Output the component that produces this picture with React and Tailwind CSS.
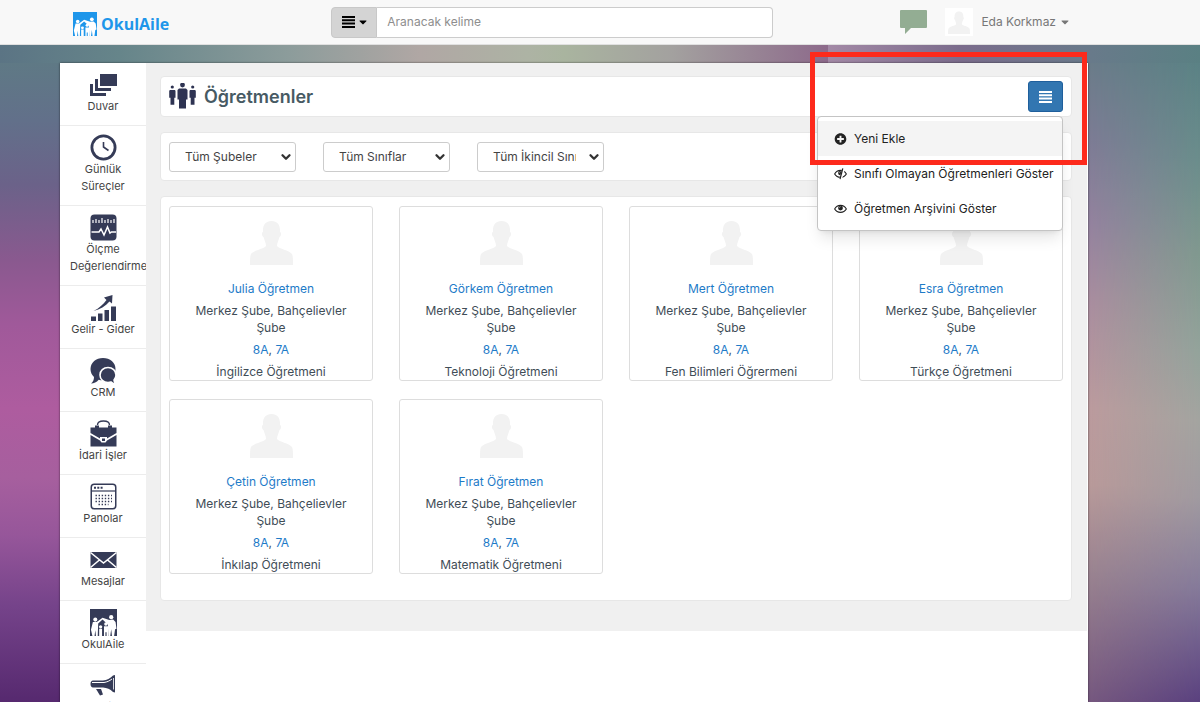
import React from 'react';
import { ChevronDown } from 'lucide-react';
import { FaPlusCircle, FaCaretDown } from 'react-icons/fa';

const DuvarIcon = () => (
  <svg viewBox="0 0 27 27" className="w-[27px] h-[27px]" fill="currentColor">
    <path d="M10 3h17v12H10zM5 8h3v9h13v3H5zM0 13h3v9h13v3H0z" />
  </svg>
);

const ClockIcon = () => (
  <svg viewBox="0 0 27 27" className="w-[27px] h-[27px]" fill="none" stroke="currentColor">
    <circle cx="13.5" cy="13.5" r="11.6" strokeWidth="2.8" />
    <path d="M13.500 8v5l5 3.500" strokeWidth="1.6" />
  </svg>
);

const MeasureIcon = () => (
  <svg viewBox="0 0 27 27" className="w-[27px] h-[27px]">
    <rect x="0.5" y="0.5" width="26" height="26" rx="4" fill="currentColor" />
    <path d="M3 6v3M6 5v4M9 6v3M12 4v5M15 6v3M18 5v4M21 6v3M24 5v4" stroke="#fff" strokeWidth="1.2" />
    <path d="M1.500 18H9l2-3 3 6 3.500-8 2.500 6 1.500-1H26" fill="none" stroke="#fff" strokeWidth="1.5" />
  </svg>
);

const ChartIcon = () => (
  <svg viewBox="0 0 27 27" className="w-[27px] h-[27px]" fill="currentColor">
    <path d="M1 22.500h5V27H1zM8 19.500h4.500V27H8zM14.500 16H19v11h-4.500zM21 12.500h5V27h-5z" />
    <path d="M3.500 17c6-3 9.500-6.500 13-11L14 3.500 22.500 1 22 9.500l-2.500-2C15.500 12 10 15.500 3.500 17z" />
  </svg>
);

const CrmIcon = () => (
  <svg viewBox="0 0 27 27" className="w-[27px] h-[27px]">
    <path d="M13 1c7 0 12.500 4.500 12.500 11S20 23.500 13 23.500c-1.500 0-3-.2-4.300-.7C6.500 25.500 4 26.500 1 26.500c2-1.500 3-3.500 3-6.500C1.800 18 .500 15.300.500 12 .500 5.500 6 1 13 1z" fill="currentColor" />
    <path d="M18 10.500c4.500 0 8 3.200 8 7.500 0 2-.8 3.800-2 5 0 1.500 1 3 2.500 4-2.500 0-4.500-.800-5.500-2-1 .4-2 .5-3 .5-4.500 0-8-3.200-8-7.500s3.500-7.500 8-7.500z" fill="currentColor" stroke="#fff" strokeWidth="1.600" />
  </svg>
);

const BagIcon = () => (
  <svg viewBox="0 0 27 27" className="w-[27px] h-[27px]" fill="currentColor">
    <path d="M7.500 5c0-3 2-4 6-4s6 1 6 4" fill="none" stroke="currentColor" strokeWidth="1.400" />
    <path d="M.500 7.500H5V5.500h4v2h9v-2h4v2h4.500V13L17 18.500V17h-7v1.500L.500 13z" />
    <path d="M.500 15l9.500 5.500 1.500 2h4l1.500-2L26.500 15v11.500H.500z" />
    <path d="M12 18.500h3V21h-3z" />
  </svg>
);

const PanelIcon = () => (
  <svg viewBox="0 0 27 27" className="w-[27px] h-[27px]" fill="none" stroke="currentColor">
    <rect x="1.25" y="1.25" width="24.500" height="24.500" rx="3" strokeWidth="1.500" />
    <path d="M1.500 8h24" strokeWidth="1.200" />
    <path d="M4 4.700h9" strokeWidth="2" strokeDasharray="2 1.300" />
    <path d="M5.500 12.500h16.500M5.500 15.500h16.500M5.500 18.500h16.500M8.500 21.500h10" strokeWidth="1.400" strokeDasharray="1.400 1.700" />
  </svg>
);

const MailIcon = () => (
  <svg viewBox="0 0 27 27" className="w-[27px] h-[27px]">
    <path d="M.500 6h26v16H.500z" fill="currentColor" />
    <path d="M.500 6.500l13 10.500 13-10.500M.500 21.500l9.500-8M26.500 21.500l-9.500-8" fill="none" stroke="#fff" strokeWidth="1.600" />
  </svg>
);

const MegaphoneIcon = () => (
  <svg viewBox="0 0 27 27" className="w-[27px] h-[27px]" fill="currentColor">
    <path d="M3 8.500h10c4-.5 7-2 10-5l2-.5v17.500l-2-.5c-3-3-6-4-10-4.500H3c-1.500 0-2.500-1.500-2.500-3.500S1.500 8.500 3 8.500z" />
    <path d="M6 17h5l2 5.500-3 1z" />
    <path d="M2 10.500h12c3-.5 5.500-1.500 8-3.500" fill="none" stroke="#fff" strokeWidth="1" />
    <path d="M23.500 6v11.500" stroke="#fff" strokeWidth="0.800" />
  </svg>
);

const FamilyIcon = ({ className }) => (
  <svg viewBox="0 0 28 28" className={className}>
    <path d="M0 0h28v28H0z" fill="currentColor" />
    <g fill="#fff">
      <circle cx="5.500" cy="11" r="2.100" />
      <circle cx="22" cy="8.500" r="2.200" />
      <circle cx="11" cy="18.500" r="1.700" />
      <circle cx="16.500" cy="15.500" r="1.800" />
      <path d="M3 13.500h4l6-4.500 7 2.500 4-.5 2.500 2.500 1 7-1.500.500L25 28h-2.200l-.8-7-1 7h-2l-.5-12-5.500-5L8.500 15 8 28H6.200l-.7-6-.8 6H2.500L1 21.500z" />
      <path d="M9.500 20.500h3V28h-3zM14.500 18h4.200V28h-1.500v-4h-1.200v4h-1.500z" />
    </g>
  </svg>
);

const PeopleIcon = () => (
  <svg viewBox="0 1 27 27" className="w-[27px] h-[27px]" fill="#2e3352">
    <circle cx="13.500" cy="3" r="2.400" />
    <path d="M10 6.500h7l1.500 1.500v9.500H17V26.500h-7v-9H8.500V8z" />
    <circle cx="3.300" cy="5" r="1.600" />
    <path d="M1 8h4.800l.7.800v7H5.300v7H1.500v-7H.200v-7z" />
    <circle cx="23.700" cy="5" r="1.600" />
    <path d="M21.200 8H26l.800.800v7h-1.300v7h-3.800v-7h-1.200v-7z" />
  </svg>
);

const Avatar = ({ className }) => (
  <svg viewBox="0 0 43 45" className={className} fill="#f2f2f2">
    <path d="M21.500 1c6 0 9 4 8.500 11 1.500 0 1.500 4-.5 5-1 4-2.500 5.500-2.500 9 2 3 12 4 15 8 1 2 1 6 1 11H0c0-5 0-9 1-11 3-4 13-5 15-8 0-3.500-1.500-5-2.500-9-2-1-2-5-.5-5C12.500 5 15.500 1 21.500 1z" />
  </svg>
);

const ListIcon = ({ className }) => (
  <svg viewBox="0 0 13 12" className={className} stroke="currentColor" strokeWidth="2">
    <path d="M0 1h13M0 4.300h13M0 7.600h13M0 11h13" />
  </svg>
);

const EyeIcon = ({ slashed }) => (
  <svg viewBox="0 0 14 12" className="w-[13px] h-3 shrink-0" fill="none" stroke="currentColor">
    <path d="M.700 6C3.500.800 10.500.800 13.300 6 10.500 10.800 3.500 10.800.700 6z" strokeWidth="1.200" />
    <circle cx="7" cy="5" r="2.600" fill="currentColor" stroke="none" />
    <path d="M5.800 4.500a1.300 1.300 0 0 1 1.200-1" stroke="#fff" strokeWidth="0.700" />
    {slashed && (
      <>
        <path d="M10.500 0L7 12" stroke="#fff" strokeWidth="2.800" />
        <path d="M9.500 0L6.500 11.500" strokeWidth="1.300" />
      </>
    )}
  </svg>
);

const navItems = [
  { label: 'Duvar', icon: <DuvarIcon /> },
  { label: 'Günlük Süreçler', icon: <ClockIcon /> },
  { label: 'Ölçme Değerlendirme', icon: <MeasureIcon /> },
  { label: 'Gelir - Gider', icon: <ChartIcon /> },
  { label: 'CRM', icon: <CrmIcon /> },
  { label: 'İdari İşler', icon: <BagIcon /> },
  { label: 'Panolar', icon: <PanelIcon /> },
  { label: 'Mesajlar', icon: <MailIcon /> },
  { label: 'OkulAile', icon: <FamilyIcon className="w-[27px] h-[27px]" /> },
  { label: 'Mail', icon: <MegaphoneIcon /> },
];

const teachers = [
  { name: 'Julia Öğretmen', branch: 'İngilizce Öğretmeni' },
  { name: 'Görkem Öğretmen', branch: 'Teknoloji Öğretmeni' },
  { name: 'Mert Öğretmen', branch: 'Fen Bilimleri Öğrermeni' },
  { name: 'Esra Öğretmen', branch: 'Türkçe Öğretmeni' },
  { name: 'Çetin Öğretmen', branch: 'İnkılap Öğretmeni' },
  { name: 'Fırat Öğretmen', branch: 'Matematik Öğretmeni' },
];

const filters = ['Tüm Şubeler', 'Tüm Sınıflar', 'Tüm İkincil Sınıflar'];

const menuItems = [
  { label: 'Yeni Ekle', icon: <FaPlusCircle className="w-[13px] h-3 shrink-0" />, active: true },
  { label: 'Sınıfı Olmayan Öğretmenleri Göster', icon: <EyeIcon slashed /> },
  { label: 'Öğretmen Arşivini Göster', icon: <EyeIcon /> },
];

const Header = () => (
  <header className="h-[45px] bg-[#f8f8f8] border-b border-[#e0e0e0] flex items-center pl-[73px] pr-[131px]">
    <a href="#" className="flex items-center gap-1 pt-1 text-[#1e96ea]">
      <FamilyIcon className="w-6 h-6" />
      <span className="font-['Open_Sans',sans-serif] font-bold text-[16px]">OkulAile</span>
    </a>
    <form className="ml-[162px] w-[442px] h-[31px] flex">
      <button type="button" aria-label="Arama türü" className="w-[46px] bg-[#d4d4d4] border border-[#c8c8c8] rounded-l flex items-center justify-center gap-1 text-black">
        <ListIcon className="w-[13px] h-3" />
        <FaCaretDown className="w-2 h-3" />
      </button>
      <input aria-label="Aranacak kelime" placeholder="Aranacak kelime" className="flex-1 min-w-0 bg-white border border-l-0 border-[#ccc] rounded-r px-[10px] text-[12px] placeholder:text-[#8e8e8e]" />
    </form>
    <div className="ml-auto flex items-center text-[#777]">
      <svg viewBox="0 0 27 24" className="w-[27px] h-6 mr-[18px]" fill="#93ad93">
        <path d="M1 0h25a1 1 0 0 1 1 1v16a1 1 0 0 1-1 1H11l-6 6v-6H1a1 1 0 0 1-1-1V1a1 1 0 0 1 1-1z" />
      </svg>
      <span className="bg-white w-7 h-7 flex items-center justify-center mr-2">
        <Avatar className="w-[22px] h-[23px]" />
      </span>
      <button className="flex items-center gap-[5px] text-[12px] whitespace-nowrap">
        Eda Korkmaz <FaCaretDown className="w-2 h-3" />
      </button>
    </div>
  </header>
);

const Sidebar = () => (
  <nav className="w-[86px] shrink-0 bg-white">
    {navItems.map(item => (
      <a key={item.label} href="#" className="flex flex-col px-[10px] pt-2 pb-[10px] border-b border-[#ececec] overflow-hidden text-[11px] leading-[17px] text-[#444]">
        <span className="flex justify-center text-[#353b57]">{item.icon}</span>
        <span className="text-center">{item.label}</span>
      </a>
    ))}
  </nav>
);

const ActionMenu = () => (
  <div className="absolute top-full right-0 mt-1 w-[246px] bg-white border border-[#c4c4c4] rounded shadow-lg py-1 z-10">
    {menuItems.map(item => (
      <a key={item.label} href="#" className={`flex items-center h-[35px] pl-4 gap-[7px] text-[12px] whitespace-nowrap text-[#222] ${item.active ? 'bg-[#f4f4f4]' : ''}`}>
        {item.icon}
        {item.label}
      </a>
    ))}
  </div>
);

const FilterSelect = ({ label }) => (
  <div className="relative">
    <select aria-label={label} className="block appearance-none w-[127px] h-[30px] bg-white border border-[#ccc] rounded-[3px] pl-[15px] pr-[27px] text-[12px] text-[#444]">
      <option>{label}</option>
    </select>
    <ChevronDown className="absolute right-[3px] top-2 w-[14px] h-[14px] text-[#333] pointer-events-none" strokeWidth={4} />
  </div>
);

const TeacherCard = ({ teacher }) => (
  <div className="border border-[#ddd] rounded-[3px] pt-[13px] flex flex-col items-center text-center text-[12px] leading-[17px] text-[#3f4d57]">
    <Avatar className="w-[43px] h-[45px]" />
    <a href="#" className="mt-[15px] text-[#1e7bc8]">{teacher.name}</a>
    <p className="mt-[5px] px-5">Merkez Şube, Bahçelievler Şube</p>
    <p className="mt-[5px]">
      <a href="#" className="text-[#1e7bc8]">8A</a>, <a href="#" className="text-[#1e7bc8]">7A</a>
    </p>
    <p className="mt-[5px]">{teacher.branch}</p>
  </div>
);

const App = () => {
  return (
    <div className="h-screen overflow-hidden flex flex-col font-[Inter,sans-serif]">
      <Header />
      <div className="h-[18px] shrink-0 bg-[linear-gradient(90deg,#5b7484,#66858a_10%,#8c9c9b_24%,#b0a7a4_35%,#adb3a4_44%,#a9b49f_47%,#a3a19f_56%,#8d6a8b_69%,#a389a6_69%,#7b6c8c_80%,#687a8a_91%,#5a8083)]" />
      <div className="flex-1 min-h-0 flex">
        <div className="w-[60px] shrink-0 bg-[linear-gradient(180deg,#5f7985,#62708a_9%,#6b6289_19%,#8a598f_31%,#a0599a_41%,#ae5c9f_54%,#a65f9e_65%,#96569a_74%,#75438a_85%,#56296f)]" />
        <div className="relative flex-1 min-w-0 flex bg-white shadow-[0_0_2px_rgba(0,0,0,0.6)]">
          <Sidebar />
          <main className="flex-1 min-w-0 self-start bg-[#f0f0f0] mr-px pt-[13px] pb-[30px] pl-[14px] pr-[15px]">
            <section className="flex items-center bg-white border border-[#e7e7e7] rounded h-[41px] px-2">
              <PeopleIcon />
              <h1 className="ml-2 text-[18px] font-semibold text-[#475a63]">Öğretmenler</h1>
              <div className="relative ml-auto">
                <button aria-label="Menü" className="w-[35px] h-[31px] bg-[#3276b1] border border-[#1f5f9c] rounded-[3px] flex items-center justify-center text-white">
                  <ListIcon className="w-[13px] h-3" />
                </button>
                <ActionMenu />
              </div>
            </section>
            <section className="mt-[15px] flex items-center gap-[27px] bg-white border border-[#e7e7e7] rounded h-[49px] px-2">
              {filters.map(f => <FilterSelect key={f} label={f} />)}
            </section>
            <section className="mt-[15px] bg-white border border-[#e7e7e7] rounded px-2 pt-[9px] pb-[26px] grid grid-cols-4 gap-x-[26px] gap-y-[18px]">
              {teachers.map(t => <TeacherCard key={t.name} teacher={t} />)}
            </section>
          </main>
          {/* Highlight frame around the action menu */}
          <div className="absolute -top-[11px] right-px w-[277px] h-[113px] border-[5px] border-[#fd2a1c] z-20 pointer-events-none" />
        </div>
        <div className="w-[112px] shrink-0 bg-[linear-gradient(180deg,#6b7c8a,#7d7c95_12%,#94829f_25%,#ab8e9f_38%,#bc9b9e_54%,#b99a9a_66%,#9a8390_80%,#76587f)]">
          <div className="h-full bg-[linear-gradient(180deg,#5b8285,#6a8d8b_15%,#80998f_30%,#93a39b_45%,#a3a4a0_56%,#a09aa0_68%,#857a9a_82%,#5a417f)] [mask-image:linear-gradient(90deg,transparent,#000)]" />
        </div>
      </div>
    </div>
  );
};

export default App;
